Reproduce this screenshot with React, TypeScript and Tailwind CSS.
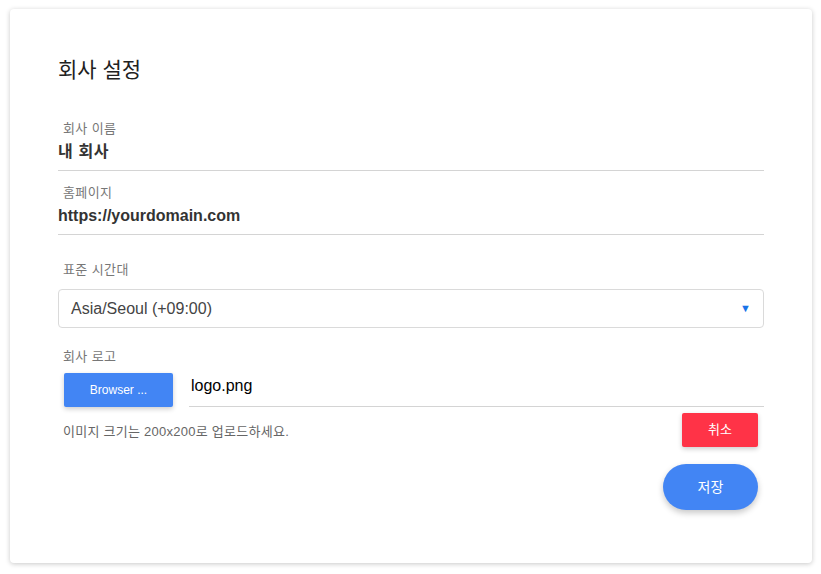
export default function App() {
  const font = { fontFamily: '"Liberation Sans", "Noto Sans CJK KR", sans-serif' };
  return (
    <div className="min-h-screen bg-white pl-[10px] pr-[9px] pt-[9px] pb-[11px]" style={font}>
      <div className="rounded-[4px] bg-white px-12 pt-[47px] pb-[53px] shadow-[0_1px_5px_rgba(0,0,0,0.22)]">
        <h1 className="text-[21px] leading-[28px] text-[#212121]">회사 설정</h1>

        {/* 회사 이름 */}
        <div className="mt-[36px] border-b border-[#d4d4d4] pb-[7px]">
          <div className="pl-[5px] text-[13px] leading-[18px] tracking-[0.03em] text-[#777]">회사 이름</div>
          <div className="mt-[3px] text-[16px] font-bold leading-[22px] tracking-[0.04em] text-[#333]">내 회사</div>
        </div>

        {/* 홈페이지 */}
        <div className="mt-[13px] border-b border-[#d4d4d4] pb-[7px]">
          <div className="pl-[5px] text-[13px] leading-[18px] tracking-[0.03em] text-[#777]">홈페이지</div>
          <div className="mt-[3px] text-[16px] font-bold leading-[22px] text-[#333]">https://yourdomain.com</div>
        </div>

        {/* 표준 시간대 */}
        <div className="mt-[26px] pl-[5px] text-[13px] leading-[18px] tracking-[0.03em] text-[#777]">표준 시간대</div>
        <div className="mt-[10px] flex h-[39px] items-center justify-between rounded-[4px] border border-[#dadada] pl-[12px] pr-[12px]">
          <span className="text-[16px] text-[#444]">Asia/Seoul (+09:00)</span>
          <span className="text-[11px] text-[#1a73e8]">▼</span>
        </div>

        {/* 회사 로고 */}
        <div className="mt-[20px] pl-[5px] text-[13px] leading-[18px] tracking-[0.03em] text-[#777]">회사 로고</div>
        <div className="mt-[7px] flex items-end">
          <button className="ml-[6px] h-[34px] w-[109px] rounded-[2px] bg-[#4285f4] text-[12px] text-white shadow-[0_2px_5px_rgba(0,0,0,0.2)]">
            Browser ...
          </button>
          <div className="ml-[16px] flex-1 border-b border-[#d4d4d4] pb-[9px] pl-[2px] text-[16px] leading-[22px] text-black">
            logo.png
          </div>
        </div>

        <div className="mt-[6px] flex items-center justify-between pr-[6px]">
          <span className="pl-[5px] pt-[4px] text-[13px] tracking-[0.02em] text-[#666]">이미지 크기는 200x200로 업로드하세요.</span>
          <button className="h-[34px] w-[76px] rounded-[2px] bg-[#ff3347] text-[13px] text-white shadow-[0_2px_5px_rgba(0,0,0,0.2)]">
            취소
          </button>
        </div>

        <div className="mt-[17px] flex justify-end pr-[6px]">
          <button className="h-[46px] w-[95px] rounded-full bg-[#4285f4] text-[14px] text-white shadow-[0_3px_6px_rgba(0,0,0,0.22)]">
            저장
          </button>
        </div>
      </div>
    </div>
  );
}
